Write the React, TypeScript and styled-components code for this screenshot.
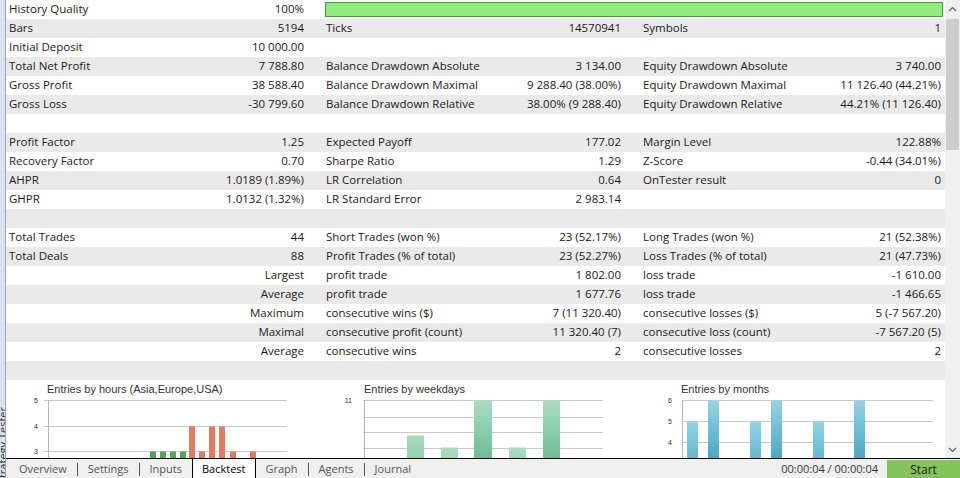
import React from 'react';
import styled, { createGlobalStyle } from 'styled-components';

const Global = createGlobalStyle`
  html, body { margin: 0; padding: 0; }
  body {
    width: 960px; height: 478px; overflow: hidden; background: #fff;
    font-family: "Open Sans", "Noto Sans", sans-serif; font-size: 11.5px; color: #1b1b1b;
  }
`;

const Frame = styled.div`
  display: flex; width: 960px; height: 478px; overflow: hidden;
`;

const SideStrip = styled.div`
  flex: none; width: 5px; border-right: 1px solid #9aa7b6; background: #d9e4f1;
  overflow: hidden; display: flex; flex-direction: column; justify-content: flex-end;
`;

const SideTitle = styled.span`
  writing-mode: vertical-rl; transform: rotate(180deg);
  font-family: "Open Sans", sans-serif; font-size: 11px; line-height: 12px;
  color: #333; white-space: nowrap; margin-left: -3px; margin-bottom: -6px;
`;

const MainCol = styled.div`
  flex: 1; display: flex; flex-direction: column; min-width: 0;
`;

const Body = styled.div`
  height: 458px; display: flex; overflow: hidden;
`;

const Content = styled.div`
  flex: 1; min-width: 0; overflow: hidden; display: flex; flex-direction: column;
`;

const Row = styled.div<{ $alt: boolean }>`
  display: grid; grid-template-columns: 316px 317px 1fr; height: 19px;
  background: ${p => (p.$alt ? '#eaeaea' : '#ffffff')};
  flex: none;
`;

const Cell = styled.div`
  display: flex; justify-content: space-between; align-items: center;
  padding: 0 18px 1px 4px; white-space: nowrap; line-height: 18px;
  &:first-child { padding-left: 3px; }
  &:last-child { padding-right: 4px; }
`;

const BarCell = styled.div`
  grid-column: 2 / 4; display: flex; align-items: center; padding: 0 2px 0 3px;
`;

const QualityBar = styled.div`
  flex: 1; height: 13px; background: #8fee7c; border: 1px solid #4b9a42;
`;

const Charts = styled.div`
  flex: 1; display: grid; grid-template-columns: 316px 317px 1fr; background: #fff;
`;

const ChartPanel = styled.div`
  display: flex; flex-direction: column; padding-top: 3px; overflow: hidden;
`;

const ChartTitle = styled.div<{ $indent: number }>`
  margin-left: ${p => p.$indent}px; height: 13px; line-height: 13px;
  font-family: "Liberation Sans", Arial, sans-serif; font-size: 11px; color: #333;
  white-space: nowrap;
`;

const ChartSvg = styled.svg`
  display: block; flex: none;
`;

const Scrollbar = styled.div`
  flex: none; width: 15px; background: #f0f0f0; display: flex; flex-direction: column;
  align-items: center;
`;

const ScrollArrow = styled.div`
  height: 17px; width: 15px; display: flex; align-items: center; justify-content: center; flex: none;
`;

const ScrollThumb = styled.div`
  width: 13px; height: 131px; background: #cdcdcd; margin-top: 2px; flex: none;
`;

const ScrollSpacer = styled.div`
  flex: 1;
`;

const TabBar = styled.div`
  height: 19px; border-top: 1px solid #000; background: #f0f0f0;
  display: flex; align-items: stretch; padding-left: 3px;
`;

const Tab = styled.div<{ $active?: boolean }>`
  padding: 0 9px; line-height: 19px; font-size: 11px; white-space: nowrap;
  color: ${p => (p.$active ? '#000' : '#555')};
  background: ${p => (p.$active ? '#fff' : 'transparent')};
  border-left: 1px solid ${p => (p.$active ? '#000' : 'transparent')};
  border-right: 1px solid ${p => (p.$active ? '#000' : 'transparent')};
`;

const TabSep = styled.div`
  width: 1px; height: 13px; background: #555; align-self: center; margin-top: 2px;
`;

const TabSpacer = styled.div`
  flex: 1;
`;

const Timer = styled.div`
  line-height: 19px; color: #333; font-size: 11px; margin-right: 9px; white-space: nowrap;
`;

const StartButton = styled.div`
  width: 73px; margin-top: 1px; background: #86c35a; color: #1b1b1b;
  display: flex; align-items: center; justify-content: center; font-size: 12px;
`;

type Pair = [string, string];
type RowDef = { c1?: Pair; c2?: Pair; c3?: Pair; bar?: boolean };

const rows: RowDef[] = [
  { c1: ['History Quality', '100%'], bar: true },
  { c1: ['Bars', '5194'], c2: ['Ticks', '14570941'], c3: ['Symbols', '1'] },
  { c1: ['Initial Deposit', '10 000.00'] },
  { c1: ['Total Net Profit', '7 788.80'], c2: ['Balance Drawdown Absolute', '3 134.00'], c3: ['Equity Drawdown Absolute', '3 740.00'] },
  { c1: ['Gross Profit', '38 588.40'], c2: ['Balance Drawdown Maximal', '9 288.40 (38.00%)'], c3: ['Equity Drawdown Maximal', '11 126.40 (44.21%)'] },
  { c1: ['Gross Loss', '-30 799.60'], c2: ['Balance Drawdown Relative', '38.00% (9 288.40)'], c3: ['Equity Drawdown Relative', '44.21% (11 126.40)'] },
  {},
  { c1: ['Profit Factor', '1.25'], c2: ['Expected Payoff', '177.02'], c3: ['Margin Level', '122.88%'] },
  { c1: ['Recovery Factor', '0.70'], c2: ['Sharpe Ratio', '1.29'], c3: ['Z-Score', '-0.44 (34.01%)'] },
  { c1: ['AHPR', '1.0189 (1.89%)'], c2: ['LR Correlation', '0.64'], c3: ['OnTester result', '0'] },
  { c1: ['GHPR', '1.0132 (1.32%)'], c2: ['LR Standard Error', '2 983.14'] },
  {},
  { c1: ['Total Trades', '44'], c2: ['Short Trades (won %)', '23 (52.17%)'], c3: ['Long Trades (won %)', '21 (52.38%)'] },
  { c1: ['Total Deals', '88'], c2: ['Profit Trades (% of total)', '23 (52.27%)'], c3: ['Loss Trades (% of total)', '21 (47.73%)'] },
  { c1: ['', 'Largest'], c2: ['profit trade', '1 802.00'], c3: ['loss trade', '-1 610.00'] },
  { c1: ['', 'Average'], c2: ['profit trade', '1 677.76'], c3: ['loss trade', '-1 466.65'] },
  { c1: ['', 'Maximum'], c2: ['consecutive wins ($)', '7 (11 320.40)'], c3: ['consecutive losses ($)', '5 (-7 567.20)'] },
  { c1: ['', 'Maximal'], c2: ['consecutive profit (count)', '11 320.40 (7)'], c3: ['consecutive loss (count)', '-7 567.20 (5)'] },
  { c1: ['', 'Average'], c2: ['consecutive wins', '2'], c3: ['consecutive losses', '2'] },
  {},
];

const PairCell: React.FC<{ p?: Pair }> = ({ p }) => (
  <Cell>
    <span>{p ? p[0] : ''}</span>
    <span>{p ? p[1] : ''}</span>
  </Cell>
);

type Bar = { x: number; w: number; top: number; fill: string };
type ChartDef = {
  title: string;
  indent: number;
  width: number;
  labels: { text: string; y: number }[];
  labelX: number;
  grid: number[];
  gx1: number;
  gx2: number;
  axisX: number;
  bars: Bar[];
  gradient?: { id: string; top: string; bottom: string };
};

const GREEN = '#4fa94f';
const RED = '#e07b62';

const charts: ChartDef[] = [
  {
    title: 'Entries by hours (Asia,Europe,USA)',
    indent: 41,
    width: 316,
    labels: [{ text: '5', y: 4 }, { text: '4', y: 30 }, { text: '3', y: 55 }],
    labelX: 32,
    grid: [4, 30, 55],
    gx1: 38,
    gx2: 281,
    axisX: 42,
    bars: [
      ...[144, 154, 164, 174].map(x => ({ x, w: 6, top: 55, fill: GREEN })),
      ...[
        [183, 30], [193, 55], [203, 30], [213, 30], [224, 55], [244, 55],
      ].map(([x, top]) => ({ x, w: 6, top, fill: RED })),
    ],
  },
  {
    title: 'Entries by weekdays',
    indent: 42,
    width: 317,
    labels: [{ text: '11', y: 4 }],
    labelX: 30,
    grid: [4, 21, 36, 52],
    gx1: 41,
    gx2: 281,
    axisX: 42,
    gradient: { id: 'gWeek', top: '#a9ddc2', bottom: '#6cbb94' },
    bars: [
      { x: 85, w: 17, top: 39, fill: 'url(#gWeek)' },
      { x: 119, w: 17, top: 51, fill: 'url(#gWeek)' },
      { x: 152, w: 18, top: 4, fill: 'url(#gWeek)' },
      { x: 187, w: 17, top: 51, fill: 'url(#gWeek)' },
      { x: 221, w: 17, top: 4, fill: 'url(#gWeek)' },
    ],
  },
  {
    title: 'Entries by months',
    indent: 42,
    width: 306,
    labels: [{ text: '6', y: 4 }, { text: '5', y: 25 }, { text: '4', y: 46 }],
    labelX: 33,
    grid: [4, 25, 46],
    gx1: 43,
    gx2: 294,
    axisX: 43,
    gradient: { id: 'gMonth', top: '#92d4e7', bottom: '#48a6c4' },
    bars: [
      { x: 48, w: 11, top: 25, fill: 'url(#gMonth)' },
      { x: 69, w: 11, top: 4, fill: 'url(#gMonth)' },
      { x: 111, w: 11, top: 25, fill: 'url(#gMonth)' },
      { x: 132, w: 11, top: 4, fill: 'url(#gMonth)' },
      { x: 174, w: 11, top: 25, fill: 'url(#gMonth)' },
      { x: 215, w: 11, top: 4, fill: 'url(#gMonth)' },
    ],
  },
];

const Chart: React.FC<{ c: ChartDef }> = ({ c }) => (
  <ChartPanel>
    <ChartTitle $indent={c.indent}>{c.title}</ChartTitle>
    <ChartSvg width={c.width} height={70} viewBox={`0 0 ${c.width} 70`}>
      {c.gradient && (
        <defs>
          <linearGradient id={c.gradient.id} x1="0" y1="0" x2="0" y2="1" gradientUnits="objectBoundingBox">
            <stop offset="0" stopColor={c.gradient.top} />
            <stop offset="1" stopColor={c.gradient.bottom} />
          </linearGradient>
        </defs>
      )}
      {c.grid.map(y => (
        <line key={y} x1={c.gx1} x2={c.gx2} y1={y + 0.5} y2={y + 0.5} stroke="#c9c9c9" strokeWidth={1} />
      ))}
      <line x1={c.axisX + 0.5} x2={c.axisX + 0.5} y1={c.grid[0]} y2={70} stroke="#b5b5b5" strokeWidth={1} />
      {c.labels.map(l => (
        <text key={l.text} x={c.labelX} y={l.y + 2.5} fontSize={7} fontFamily="Liberation Sans, Arial, sans-serif" fill="#333" textAnchor="end">
          {l.text}
        </text>
      ))}
      {c.bars.map((b, i) => (
        <rect key={i} x={b.x} y={b.top + 0.5} width={b.w} height={60} fill={b.fill} />
      ))}
    </ChartSvg>
  </ChartPanel>
);

const Chevron: React.FC<{ up?: boolean }> = ({ up }) => (
  <svg width="9" height="6" viewBox="0 0 9 6">
    <polyline
      points={up ? '1,5 4.5,1.5 8,5' : '1,1 4.5,4.5 8,1'}
      fill="none"
      stroke="#606060"
      strokeWidth="1.2"
    />
  </svg>
);

const tabs = ['Overview', 'Settings', 'Inputs', 'Backtest', 'Graph', 'Agents', 'Journal'];
const ACTIVE = 'Backtest';

export default function App() {
  const activeIdx = tabs.indexOf(ACTIVE);
  return (
    <>
      <Global />
      <Frame>
        <SideStrip>
          <SideTitle>Strategy Tester</SideTitle>
        </SideStrip>
        <MainCol>
          <Body>
            <Content>
              {rows.map((r, i) => (
                <Row key={i} $alt={i % 2 === 1}>
                  <PairCell p={r.c1} />
                  {r.bar ? (
                    <BarCell>
                      <QualityBar />
                    </BarCell>
                  ) : (
                    <>
                      <PairCell p={r.c2} />
                      <PairCell p={r.c3} />
                    </>
                  )}
                </Row>
              ))}
              <Charts>
                {charts.map(c => (
                  <Chart key={c.title} c={c} />
                ))}
              </Charts>
            </Content>
            <Scrollbar>
              <ScrollArrow>
                <Chevron up />
              </ScrollArrow>
              <ScrollThumb />
              <ScrollSpacer />
              <ScrollArrow>
                <Chevron />
              </ScrollArrow>
            </Scrollbar>
          </Body>
          <TabBar>
            {tabs.map((t, i) => (
              <React.Fragment key={t}>
                {i > 0 && i !== activeIdx && i !== activeIdx + 1 && <TabSep />}
                <Tab $active={i === activeIdx}>{t}</Tab>
              </React.Fragment>
            ))}
            <TabSpacer />
            <Timer>00:00:04 / 00:00:04</Timer>
            <StartButton>Start</StartButton>
          </TabBar>
        </MainCol>
      </Frame>
    </>
  );
}
